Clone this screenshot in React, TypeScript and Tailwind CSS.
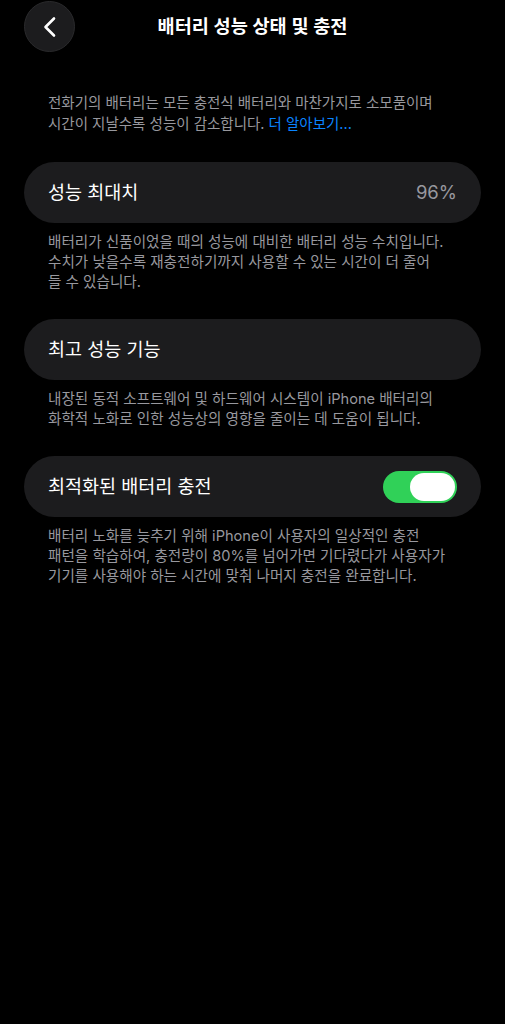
import React from "react";

const FONT = {
  fontFamily: '"Inter", "Noto Sans CJK KR", "Noto Sans", sans-serif',
};

function BackButton() {
  return (
    <button className="ml-[24px] flex h-[51px] w-[51px] items-center justify-center rounded-full border border-[#2a2a2c] bg-[#1c1c1e]">
      <svg width="16" height="22" viewBox="0 0 16 22" fill="none">
        <path
          d="M12 2.5 L3.5 11 L12 19.5"
          stroke="#ffffff"
          strokeWidth="2.6"
          strokeLinecap="round"
          strokeLinejoin="round"
        />
      </svg>
    </button>
  );
}

function Toggle() {
  return (
    <div className="flex h-[32px] w-[74px] items-center justify-end rounded-full bg-[#30d158] p-[2px]">
      <div className="h-[28px] w-[45px] rounded-full bg-white" />
    </div>
  );
}

function Card({ children }: { children: React.ReactNode }) {
  return (
    <div className="mx-[24px] flex h-[61px] items-center justify-between rounded-full bg-[#1c1c1e] pl-[24px] pr-[24px]">
      {children}
    </div>
  );
}

function Note({ lines }: { lines: React.ReactNode[] }) {
  return (
    <div className="mt-[9px] px-[48px] text-[14.6px] leading-[20px] text-[#98989e]">
      {lines.map((l, i) => (
        <div key={i} className="whitespace-nowrap">
          {l}
        </div>
      ))}
    </div>
  );
}

export default function App() {
  return (
    <div className="min-h-[1024px] w-full bg-black text-white" style={FONT}>
      {/* navigation bar */}
      <div className="grid h-[51px] grid-cols-[1fr_auto_1fr] items-center pt-px">
        <div className="flex items-center">
          <BackButton />
        </div>
        <h1 className="text-[18.6px] font-semibold text-white">
          배터리 성능 상태 및 충전
        </h1>
        <div />
      </div>

      {/* intro */}
      <div className="mt-[41px] px-[48px] text-[14.5px] leading-[21px] text-[#98989e]">
        <div className="whitespace-nowrap">
          전화기의 배터리는 모든 충전식 배터리와 마찬가지로 소모품이며
        </div>
        <div className="whitespace-nowrap">
          시간이 지날수록 성능이 감소합니다.{" "}
          <span className="text-[#0a84ff]">더 알아보기...</span>
        </div>
      </div>

      {/* peak capacity */}
      <div className="mt-[28px]">
        <Card>
          <span className="text-[18.5px]">성능 최대치</span>
          <span className="text-[18.5px] text-[#98989e]">96%</span>
        </Card>
        <Note
          lines={[
            "배터리가 신품이었을 때의 성능에 대비한 배터리 성능 수치입니다.",
            "수치가 낮을수록 재충전하기까지 사용할 수 있는 시간이 더 줄어",
            "들 수 있습니다.",
          ]}
        />
      </div>

      {/* peak performance */}
      <div className="mt-[27px]">
        <Card>
          <span className="text-[18.5px]">최고 성능 기능</span>
        </Card>
        <Note
          lines={[
            "내장된 동적 소프트웨어 및 하드웨어 시스템이 iPhone 배터리의",
            "화학적 노화로 인한 성능상의 영향을 줄이는 데 도움이 됩니다.",
          ]}
        />
      </div>

      {/* optimized charging */}
      <div className="mt-[27px]">
        <Card>
          <span className="text-[18.5px]">최적화된 배터리 충전</span>
          <Toggle />
        </Card>
        <Note
          lines={[
            "배터리 노화를 늦추기 위해 iPhone이 사용자의 일상적인 충전",
            "패턴을 학습하여, 충전량이 80%를 넘어가면 기다렸다가 사용자가",
            "기기를 사용해야 하는 시간에 맞춰 나머지 충전을 완료합니다.",
          ]}
        />
      </div>
    </div>
  );
}
